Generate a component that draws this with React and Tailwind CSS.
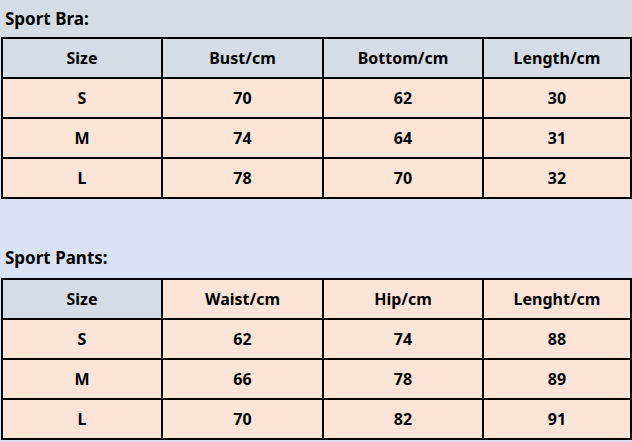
export default function App() {
  const bra = [
    ["S", "70", "62", "30"],
    ["M", "74", "64", "31"],
    ["L", "78", "70", "32"],
  ];
  const pants = [
    ["S", "62", "74", "88"],
    ["M", "66", "78", "89"],
    ["L", "70", "82", "91"],
  ];

  const widths = ["w-[160px]", "w-[161px]", "w-[160px]", "w-[148px]"];
  const cell = "border-2 border-black h-[40px] text-center align-middle p-0";

  return (
    <div className="w-[632px] h-[442px] overflow-hidden bg-[#d9e1f2] font-['Noto_Sans',sans-serif] font-bold text-[16px] text-black">
      {/* Sport Bra */}
      <div className="bg-[#d6dce4] h-[37px] pl-[5px] pt-[9px] text-[17px] leading-[20px]">Sport Bra:</div>
      <table className="border-collapse ml-[1px] table-fixed">
        <tbody>
          <tr className="bg-[#d6dce4]">
            {["Size", "Bust/cm", "Bottom/cm", "Length/cm"].map((h, i) => (
              <td key={h} className={cell + " " + widths[i]}>{h}</td>
            ))}
          </tr>
          {bra.map((r) => (
            <tr key={r[0]} className="bg-[#fce4d6]">
              {r.map((v, i) => (
                <td key={i} className={cell + " " + widths[i]}>{v}</td>
              ))}
            </tr>
          ))}
        </tbody>
      </table>

      {/* Sport Pants */}
      <div className="h-[79px] pl-[5px] pt-[49px] text-[17px] leading-[20px]">Sport Pants:</div>
      <table className="border-collapse ml-[1px] table-fixed">
        <tbody>
          <tr className="bg-[#fce4d6]">
            {["Size", "Waist/cm", "Hip/cm", "Lenght/cm"].map((h, i) => (
              <td key={h} className={cell + " " + widths[i] + (i === 0 ? " bg-[#d6dce4]" : "")}>{h}</td>
            ))}
          </tr>
          {pants.map((r) => (
            <tr key={r[0]} className="bg-[#fce4d6]">
              {r.map((v, i) => (
                <td key={i} className={cell + " " + widths[i]}>{v}</td>
              ))}
            </tr>
          ))}
        </tbody>
      </table>
    </div>
  );
}
